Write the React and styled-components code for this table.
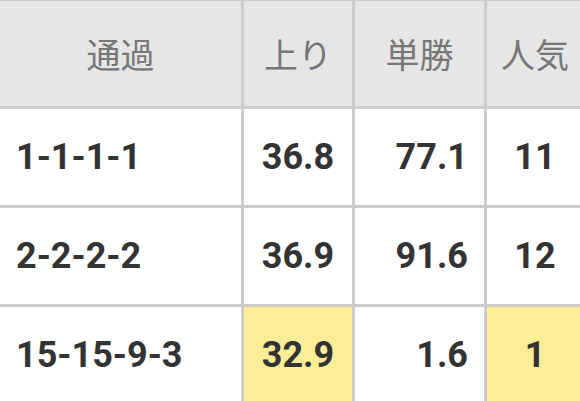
import React from 'react';
import styled, { createGlobalStyle } from 'styled-components';

const GlobalStyle = createGlobalStyle`
    body {
        margin: 0;
        background: #ffffff;
        overflow: hidden;
        font-family: Roboto, "Noto Sans CJK JP", sans-serif;
    }
`
const Table = styled.div`
    display: grid;
    grid-template-columns: 241px 108px 129px 96px;
    grid-template-rows: 105px 96px 96px 96px;
    gap: 3px;
    padding-top: 1px;
    width: 583px;
    background: #cccccc;
`
const HeadCell = styled.div`
    display: flex;
    align-items: center;
    justify-content: center;
    background: #e6e6e6;
    color: #777777;
    font-size: 34px;
    font-weight: 400;
`
const Cell = styled.div`
    display: flex;
    align-items: center;
    justify-content: ${({align}) => align === 'left' ? 'flex-start' : align === 'right' ? 'flex-end' : 'center'};
    padding: 0 ${({align}) => align === 'center' ? 0 : 16}px;
    background: ${({hot}) => hot ? '#fcee96' : '#ffffff'};
    color: #333333;
    font-size: 36px;
    font-weight: 700;
`

const rows = [
    {pass: '1-1-1-1', last: '36.8', odds: '77.1', pop: '11'},
    {pass: '2-2-2-2', last: '36.9', odds: '91.6', pop: '12'},
    {pass: '15-15-9-3', last: '32.9', odds: '1.6', pop: '1', best: true},
]

function App() {
    return (
        <>
            <GlobalStyle/>
            <Table>
                <HeadCell>通過</HeadCell>
                <HeadCell>上り</HeadCell>
                <HeadCell>単勝</HeadCell>
                <HeadCell>人気</HeadCell>
                {rows.map(row => (
                    <React.Fragment key={row.pass}>
                        <Cell align='left'>{row.pass}</Cell>
                        <Cell align='center' hot={row.best}>{row.last}</Cell>
                        <Cell align='right'>{row.odds}</Cell>
                        <Cell align='center' hot={row.best}>{row.pop}</Cell>
                    </React.Fragment>
                ))}
            </Table>
        </>
    )
}

export default App;
